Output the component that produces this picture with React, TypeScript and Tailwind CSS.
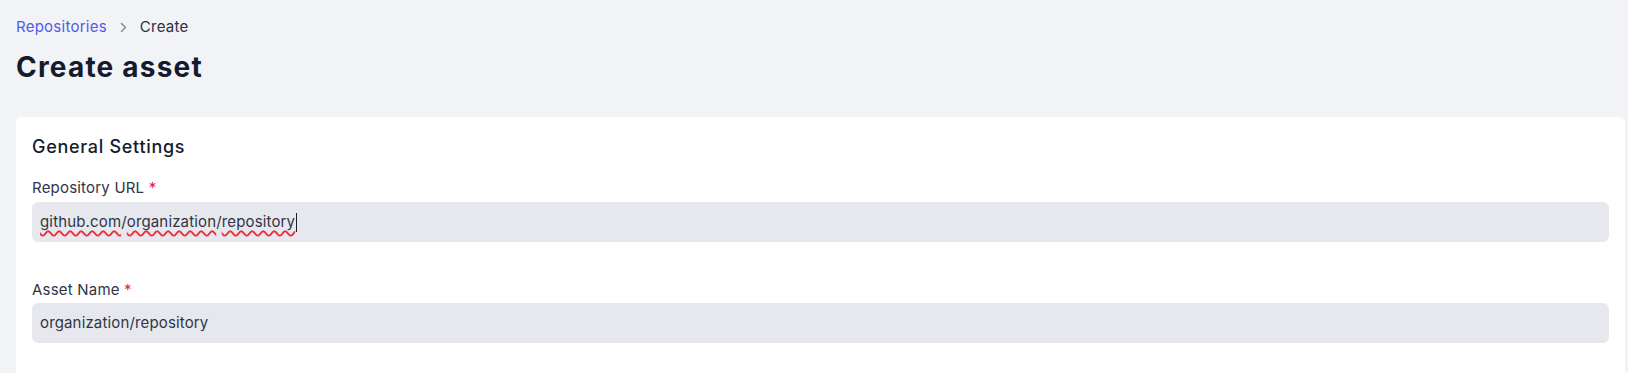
import React from "react";

function Chevron() {
  return (
    <svg width="7" height="11" viewBox="0 0 7 11" fill="none" className="text-[#8a8f9c]">
      <path d="M1.5 1.5l4 4-4 4" stroke="currentColor" strokeWidth="1.6" strokeLinecap="round" strokeLinejoin="round" />
    </svg>
  );
}

function Squiggle({ children }: { children: React.ReactNode }) {
  return (
    <span className="underline decoration-wavy decoration-[#ef2d3a] decoration-[1.5px] underline-offset-[3px]">
      {children}
    </span>
  );
}

function Label({ text }: { text: string }) {
  return (
    <label className="block text-[15px] leading-[22px] tracking-[0.2px] text-[#2f3545]">
      {text} <span className="text-[#e11d48]">*</span>
    </label>
  );
}

export default function App() {
  return (
    <div className="min-h-screen bg-[#f2f3f7] font-['Inter',sans-serif]">
      <div className="pl-4 pr-[3px] pt-[17px]">
        <nav className="flex items-center gap-[13px] text-[15px] leading-5 tracking-[0.25px]">
          <a className="text-[#4f5bea]">Repositories</a>
          <Chevron />
          <span className="text-[#2b3040]">Create</span>
        </nav>
        <h1 className="mt-3 text-[28px] leading-9 font-bold tracking-[1.2px] text-[#151b2c]">Create asset</h1>

        <div className="mt-8 rounded-md bg-white px-4 pt-4 pb-24">
          <h2 className="text-lg leading-7 font-medium tracking-[0.7px] text-[#151b2c]">General Settings</h2>

          <div className="mt-4">
            <Label text="Repository URL" />
            <div className="mt-[3px] flex h-10 items-center rounded-md bg-[#e6e8ed] px-2 text-[15px] tracking-[0.15px] text-[#2f3545]">
              <span>
                <Squiggle>github.com</Squiggle>/<Squiggle>organization</Squiggle>/<Squiggle>repository</Squiggle>
              </span>
              <span className="ml-px inline-block h-[19px] w-px bg-[#1b1f2a]" />
            </div>
          </div>

          <div className="mt-[37px]">
            <Label text="Asset Name" />
            <div className="mt-[2px] flex h-10 items-center rounded-md bg-[#e6e8ed] px-2 text-[15px] tracking-[0.15px] text-[#2f3545]">
              organization/repository
            </div>
          </div>
        </div>
      </div>
    </div>
  );
}
